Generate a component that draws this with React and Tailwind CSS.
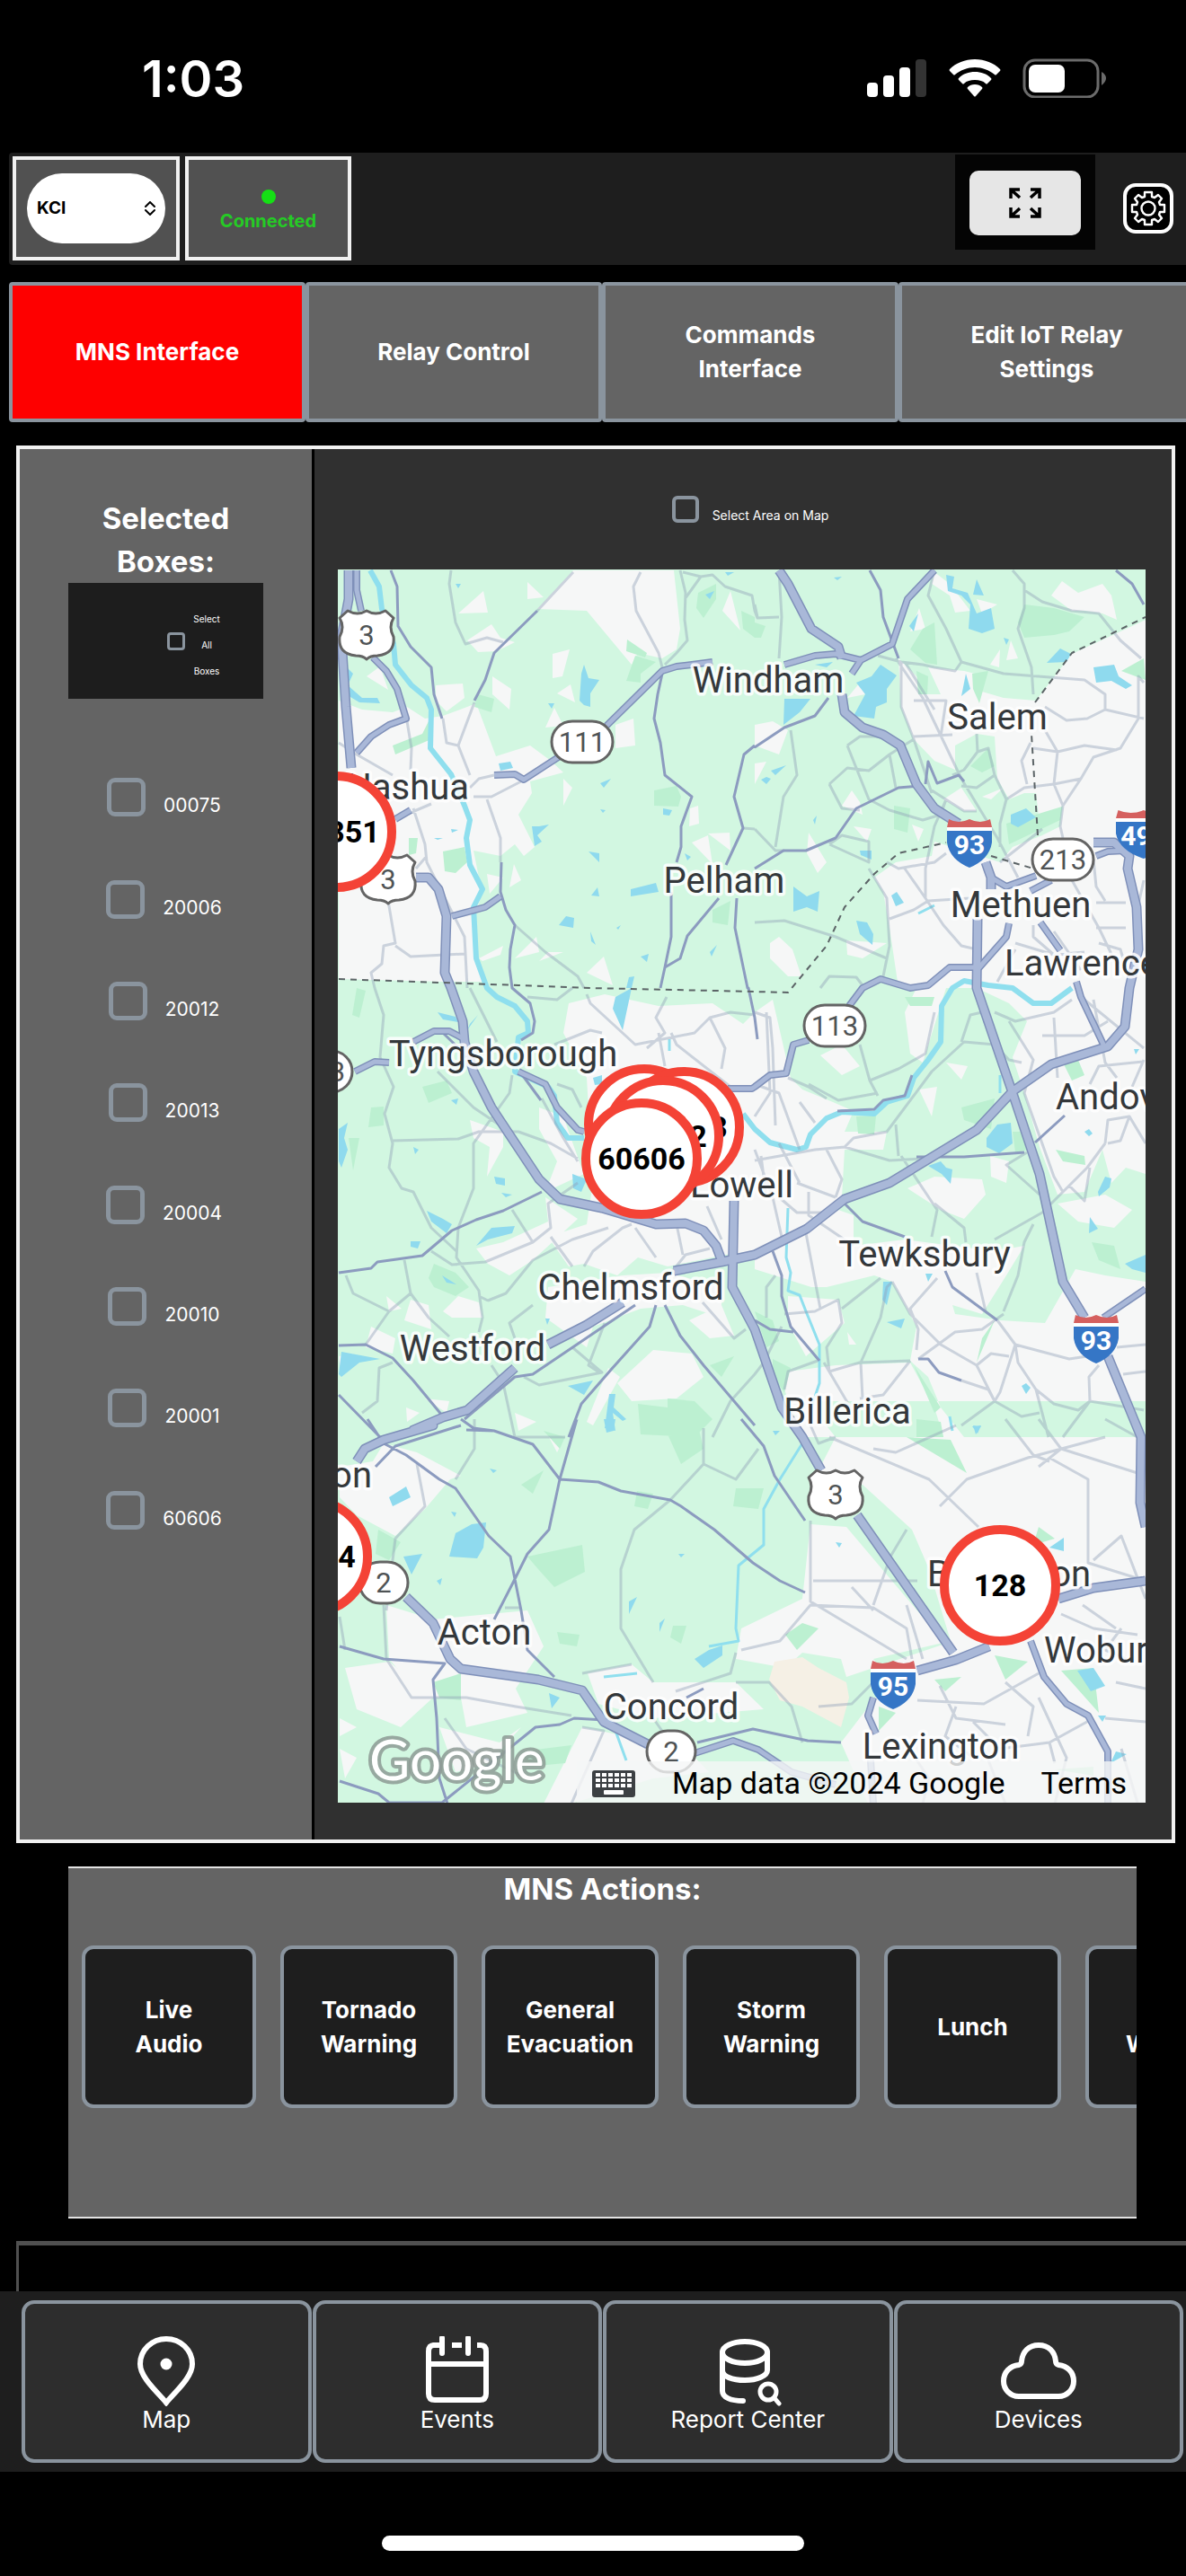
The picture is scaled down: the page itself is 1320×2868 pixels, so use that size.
import React from "react";

/* ------------------------------------------------------------------ */
/* Map geometry                                                        */
/* The map is surveyed in five sheets; each has an origin and a scale. */
/* A line or polygon is a list of points, a letter selects the sheet.  */
/* ------------------------------------------------------------------ */
const SHEETS = {
  a: [-16, -34, 3, 3],
  b: [464, -34, 3, 3],
  c: [-16, 466, 3, 3],
  d: [464, 466, 3, 3],
  e: [-16, 946, 1.633, 3],
};

function trace(line, closed) {
  let sheet = SHEETS.a;
  const out = [];
  for (const token of line.trim().split(/\s+/)) {
    if (SHEETS[token]) {
      sheet = SHEETS[token];
      continue;
    }
    const [x, y] = token.split(",").map(Number);
    out.push(`${Math.round(sheet[0] + x / sheet[2])} ${Math.round(sheet[1] + y / sheet[3])}`);
  }
  return "M" + out.join("L") + (closed ? "Z" : "");
}

const all = (text, closed) =>
  text
    .split(";")
    .filter((s) => s.trim())
    .map((s) => trace(s, closed))
    .join("");

const URBAN = all(
  `a 50,540 130,570 230,580 280,560 340,600 400,590 480,560 510,550 575,725 690,690 760,740 800,780 690,810 695,850 650,920 705,1030 670,1060 640,1020 590,1060 500,1040 520,1130 535,1180 500,1260 510,1400 540,1480 400,1480 50,1470;
  a 835,105 715,235 880,240 1030,420 1050,380 1130,400 1180,370 1190,300 1170,105;
  a 680,145 735,195 680,200; a 535,175 550,245 450,250; a 480,340 560,285 590,330 640,345 580,375 515,378;
  a 765,385 822,368 798,460 765,465; a 780,515 825,487 840,545; a 565,460 628,500 622,570 565,520;
  a 770,565 800,625 740,630; a 375,490 465,482 470,530 410,575 375,540; a 145,460 190,425 215,505;
  a 975,620 1035,600 1040,690 975,700; a 1360,175 1392,305 1332,240; a 1230,1015 1285,990 1300,1085; a 1285,985 1355,980 1360,1040;
  a 635,1085 660,1140 620,1165; a 545,1120 600,1130 555,1185; a 520,1400 600,1360 590,1390 530,1410; a 640,1400 710,1330 720,1380;
  a 880,1450 935,1395 965,1490; a 750,1380 800,1380 720,1410; a 800,800 830,830 800,890; a 1225,900 1250,890 1255,950 1220,960;
  b 1305,270 1060,385 940,540 830,530 760,510 770,460 700,440 580,430 620,520 570,520 560,480 480,400 490,560 530,670 600,740 670,770 670,690 740,650 800,660 810,800 850,870 900,850 940,850 950,950 1030,890 1020,960 960,990 860,1030 820,1080 600,1010 590,1060 470,1080 400,1130 430,1180 450,1300 480,1500 1305,1500;
  b 600,110 650,150 720,240 670,245 650,190 590,150; b 740,200 810,220 760,250; b 550,230 570,300 520,310; b 990,190 1025,140 1080,180 1160,150 1190,190 1210,270 1160,250 1100,240 1060,240;
  b 820,370 815,430 785,420; b 855,340 880,400 840,405; b 630,870 690,830 740,910 700,910; b 760,860 830,830 790,870;
  b 290,890 325,840 350,880 360,920; b 180,980 240,1080 210,1115 175,1050; b 50,1350 80,1330 125,1370 155,1460 110,1460 50,1400; b 305,1340 440,1350 360,1400 310,1390;
  b 0,620 60,610 110,640 80,720 0,690; b 0,750 40,745 0,820; b 330,960 390,970 375,1010; b 350,480 370,520 310,530; b 525,955 565,970 545,1010;
  c 820,50 940,20 1120,60 1300,50 1400,120 1440,80 d 60,40 120,300 160,340 260,380 330,410 300,480 440,480 430,540 300,540 290,700 180,790 0,880 c 1440,880 1340,890 1150,930 1050,900 980,960 870,920 820,930 750,830 880,790 900,650 880,300 800,150;
  c 720,400 800,430 840,540 870,620 740,680 780,580 720,470; c 490,440 600,480 600,530 545,630 555,530 500,500;
  c 510,870 600,850 750,780 740,700 850,770 700,910 620,960 550,920; c 290,1040 350,1060 360,1140 270,1110; c 400,1080 450,1030 520,1050 530,1100 430,1100;
  c 750,1000 1000,960 1150,950 1330,1000 1330,1100 1200,1060 1060,1070 900,1130 880,1200 740,1100; c 1100,1210 1230,1220 1270,1300 1180,1370 1030,1380 980,1320;
  c 880,1450 950,1270 990,1300 900,1460; c 275,1400 320,1420 280,1450; c 340,1370 420,1380 410,1420; c 640,1420 710,1450 650,1480; c 160,1130 240,1170 230,1220 140,1200;
  c 1220,1110 1330,1060 1370,1160 1290,1170; c 50,1230 100,1220 60,1300; c 210,1030 260,1070 220,1080;
  d 740,0 1305,0 1305,620 1240,600 1190,650 1160,540 1100,680 1010,690 950,530 900,350 860,230 910,110 850,50;
  d 0,900 160,820 280,740 330,760 330,860 500,840 800,880 900,860 840,960 760,1090 660,1060 670,1090 820,1110 970,1120 1070,940 1170,960 1305,980 1305,1500 700,1500 620,1400 580,1300 520,1245 540,1130 460,980 400,960 240,1000 190,1000 0,940;
  d 110,1280 270,1260 520,1250 600,1400 630,1500 160,1500 100,1340; d 110,1030 280,1040 300,1120 170,1230 110,1120;
  d 220,225 290,190 350,260 290,290; d 510,670 600,630 760,640 770,690 700,770 620,740; d 640,250 710,260 690,305; d 1010,720 1170,690 1260,740 1200,800 1080,780;
  d 550,340 610,330 590,430; d 785,560 850,580 840,650 790,630; d 540,0 640,0 560,250 520,220 500,80; d 310,1150 340,1190 315,1190;
  e 905,0 930,60 900,170 980,220 1070,370 1100,500 1140,740 1000,800 1030,870 1000,940 940,1080 990,1285 1495,1285 1495,-60 905,-60;
  e 885,350 950,360 1130,750 1000,830 950,860 940,800 870,780 840,830 750,800 760,700 870,600;
  e 30,260 30,160 90,140 110,80 170,110 250,190 230,200 185,300 130,390 60,320;
  e 115,620 200,670 370,640 400,760 350,900 370,980 260,1030 250,930 180,930 120,800; e 40,830 120,810 200,930 140,1030 60,970;
  e 480,850 560,820 600,880 750,880 800,970 600,1000 500,950; e 470,1030 660,1100 700,1180 600,1200 450,1285 400,1285;
  e 210,1030 320,1080 360,1030 300,1150 240,1180; e 30,1100 60,1130 40,1200; e 410,60 440,60 425,110; e 30,1000 60,1030 30,1060`,
  true
);

const PARKS = all(
  `a 1015,335 1080,380 1075,395 1010,375; a 1040,390 1110,410 1060,450 1060,480 1010,475; a 515,520 570,535 560,580 505,560;
  a 1105,840 1180,825 1195,860 1185,895 1105,890; a 400,1045 470,1030 480,1080 440,1115 405,1110; a 1250,180 1310,150 1310,200 1270,265 1245,230;
  a 1300,1240 1360,1210 1350,1290 1300,1280; a 230,690 330,650 350,610 360,670 240,720; a 285,1000 315,1000 310,1050 285,1055; a 1395,240 1440,260 1440,330 1400,300;
  b 880,280 900,220 1000,230 1100,260 1050,310 1000,320 900,330; b 520,370 560,300 600,280 610,420 570,415; b 540,440 580,460 575,520 545,520; b 725,450 780,440 750,550 730,500;
  b 720,760 780,700 800,760 760,780; b 465,890 520,900 510,980 465,970; b 1225,440 1300,400 1305,470; b 840,950 1025,895 1020,940 850,1020; b 0,280 35,290 20,330 0,330;
  c 330,330 410,310 430,350 350,385; c 350,970 370,920 440,950 485,1000 440,1030 370,1000; c 1050,1390 1150,1400 1150,1370 1240,1380 1300,1440 1240,1500 1060,1490;
  c 160,400 200,395 200,460 150,465; c 1290,1260 1370,1230 1330,1300; c 85,500 120,500 100,610; c 110,0 140,10 120,100 95,90;
  d 690,400 800,370 790,470 700,440; d 1005,540 1100,560 1105,590 1030,580; d 1125,850 1200,860 1220,940 1150,910; d 340,430 405,425 400,490 345,485; d 500,30 600,30 590,60 520,60;
  d 0,1080 60,1110 80,1180 40,1200; d 860,480 900,480 915,540 870,550; d 1030,250 1080,240 1100,290 1060,310; d 60,1240 120,1270 100,1350 60,1300; d 530,1260 620,1400 600,1420; d 800,1110 740,1250 760,1170; d 540,1440 620,1450 630,1500 540,1500;
  e 370,460 470,420 475,510 420,560 390,500; e 400,40 440,60 430,100; e 570,240 600,250 590,300 565,290; e 360,220 400,170 380,250; e 620,30 680,10 690,100 650,150;
  e 425,710 465,720 460,760 430,750; e 840,720 870,680 900,700 860,770; e 200,880 250,850 250,940 210,930; e 360,1110 450,1090 440,1150 370,1160;
  e 1300,360 1330,400 1290,420; e 1340,840 1400,830 1410,980 1370,900; e 100,370 140,410 120,470 95,450; e 1220,790 1280,810 1240,870; e 1110,870 1160,860 1130,910; e 635,690 660,690 650,750 630,730; e 750,230 800,230 790,300 745,290;
  e 1060,60 1140,70 1170,180; e 1010,960 1040,980 1010,1040; e 1330,1170 1400,1160 1400,1190`,
  true
);

const WATER = all(
  `a 870,420 885,465 920,470 890,515 890,560 870,555 855,540 860,450; a 70,420 100,450 80,490 130,530 180,530 190,550 120,545 75,520; a 585,750 625,745 632,765 590,775;
  a 697,960 720,960 752,955 715,990 730,1010 705,1025; a 885,1045 920,1050 920,1080; a 1025,1170 1110,1150 1120,1180 1025,1195; a 785,1290 810,1260 838,1265 835,1300;
  a 890,1310 908,1355 895,1345; a 1135,900 1165,905 1155,925 1135,920; a 1060,1395 1085,1385 1080,1412; a 1010,1500 1020,1465 1038,1460 1030,1500; a 1290,1380 1315,1355 1295,1395;
  a 440,150 460,150 450,165; a 1275,185 1305,175 1290,200; a 895,1190 915,1165 920,1195; a 750,550 772,550 762,568; a 925,815 960,800 935,830; a 1340,110 1370,110 1350,122; a 425,970 450,972 430,980; a 370,998 398,1000 380,1006; a 1205,1050 1228,1062 1215,1075; a 925,902 942,905 932,915; a 978,1298 992,1290 985,1306;
  b 640,120 665,125 660,165 710,180 740,250 790,230 800,300 760,315 715,300 720,220 690,190 645,175; b 740,135 765,190 730,185; b 515,290 545,250 530,310;
  b 420,420 475,455 440,500 440,545 405,560 400,600 330,590 370,520 340,480 390,460; b 100,535 185,535 150,580 95,620; b 975,415 1020,365 1055,385 1040,410;
  b 1130,430 1200,420 1215,460 1260,490 1240,500 1190,475 1140,480; b 705,450 720,500 690,525; b 130,1160 175,1195 215,1175 210,1245 175,1230 130,1245; b 455,1190 475,1180 497,1215 470,1228;
  b 340,1275 375,1280 395,1320 393,1355 350,1320; b 855,920 905,900 940,930 880,962 855,950; b 350,1040 390,1040 390,1070 355,1055; b 55,775 105,755 70,790; b 20,805 40,795 55,800 40,820; b 265,130 290,125 275,138; b 200,420 260,410 240,430; b 830,330 850,335 840,355; b 195,940 208,925 200,955;
  c 975,30 1030,0 1000,140 965,70; c 380,80 440,95 450,115 400,105; c 50,470 80,450 70,500 80,540 60,600 50,580; c 570,630 605,635 605,660 575,655; c 345,745 400,770 430,790 410,820 360,780;
  c 290,845 325,845 315,870 292,865; c 510,860 560,800 640,795 630,820 550,840; c 830,620 880,640 860,680 835,670; c 60,1215 190,1240 120,1250 60,1300 50,1290; c 815,1330 900,1310 870,1360;
  c 955,1355 975,1355 970,1400 1010,1440 1000,1445 965,1420 975,1480 940,1470; c 300,530 318,540 305,555; c 900,300 930,290 930,320 905,325; c 595,685 630,690 610,698; c 425,375 450,370 445,390; c 480,140 515,90 490,120; c 395,960 445,990 410,985; c 740,1105 755,1105 748,1125;
  d 775,500 810,455 855,450 860,520 815,552 775,530; d 580,595 620,580 640,600 660,605 655,655 625,620; d 430,980 460,980 440,1060 425,1040; d 440,1115 500,1105 490,1138; d 570,955 593,955 580,980;
  d 890,1330 905,1320 920,1335 905,1355; d 725,1465 755,1460 745,1488; d 1170,630 1190,635 1185,665 1150,695 1145,680; d 1120,765 1145,805 1115,820; d 1235,920 1305,890 1305,950 1260,940; d 1100,480 1115,470 1128,485 1115,495; d 60,1480 85,1480 70,1495; d 1265,205 1285,205 1272,222;
  e 240,380 270,350 295,345 290,430 280,465 228,460; e 145,460 180,450 160,520; e 120,260 150,225 158,260 125,290; e 700,770 725,755 725,790 690,830 675,800; e 410,915 430,930 415,965;
  e 555,610 570,595 555,650; e 610,680 620,665 610,710; e 1370,840 1400,830 1420,890 1395,910; e 1320,430 1345,395 1345,440; e 1440,1110 1460,1120 1430,1150; e 232,310 242,312 238,328; e 645,450 657,450 650,462; e 205,540 215,530 212,556; e 302,165 315,170 308,180; e 510,0 530,0 528,40 515,45; e 1180,20 1195,25 1185,50; e 930,410 942,415 938,430; e 1408,990 1422,990 1415,1010`,
  true
);

const BEIGE = all(`e 820,810 870,795 900,830 950,880 955,930 940,1030 870,960 830,940 810,870`, true);

const RIVERS = all(
  `a 155,105 185,160 195,235 235,350 240,420 295,490 345,530 360,570 358,700 425,785 470,890 488,940 478,1000 490,1090 530,1170 500,1230 510,1400 545,1500 c 580,30 640,60 680,110 685,150 650,165 640,280 750,330 770,360 780,450 815,500 870,500;
  c 1400,420 1440,470 d 50,515 140,540 170,530 185,490 240,435 290,415 400,420 440,380 510,360 530,300 580,240 620,180 625,60 660,0 b 700,1475 780,1490 d 860,0 930,50 990,50 1060,0`
);

const CREEKS = all(
  `d 110,735 105,900 120,950 110,1010 150,1025 170,1080 215,1190 215,1320 190,1400; e 870,80 830,200 800,300 800,420 755,490 750,700 755,740 700,760; e 510,860 570,850; e 530,1040 550,1140; d 650,1430 660,1480; b 545,1250 600,1225; d 820,290 820,350; c 1155,170 1155,210`
);

const LOCAL = all(
  `a 425,105 420,150 440,280 475,350 545,330 600,345; a 835,110 715,240; a 505,545 450,690 490,790; a 1060,110 1035,160 1045,240 1120,380 1135,440;
  a 1190,105 1210,180 1205,270 1215,340 1180,380 1140,420; a 1200,110 1260,125 1300,120 1340,160 1430,190 b 0,240 10,265 80,260; a 1260,125 1205,200;
  a 280,610 295,700 290,770; a 400,600 410,680 450,690; a 110,720 230,790; a 50,680 110,720; a 300,900 340,1020 345,1080 470,1330 480,1500; a 345,1060 310,1100;
  a 215,1210 240,1350 200,1360 195,1420 160,1450 170,1500; a 240,1360 290,1395 470,1385; a 500,860 560,860 660,810; a 490,830 520,800 570,790; a 545,870 590,1000 590,1080; a 640,1290 740,1380 850,1460 870,1500; a 240,935 360,885; a 1400,965 1440,970;
  c 170,0 200,90 190,230 235,330 205,420 230,520 220,600 260,670 300,680 360,800 445,880; c 230,510 450,505 520,480 650,480 760,520 850,570; c 490,0 580,180; c 380,280 500,400 620,480; c 630,290 620,350 500,520 500,670 450,800 445,900 520,1010 530,1100 520,1150;
  c 130,1420 180,1380 185,1270 230,1250; c 75,960 100,1020 220,1080 290,1020 270,910; c 220,1080 140,1190; c 290,1020 350,1100 420,1165; c 360,880 430,925 540,915 700,850 760,800 750,720 850,650; c 550,1045 610,1020 700,910 830,840 950,800; c 520,1030 550,1045;
  c 870,930 900,880 1000,800 1030,790; c 760,830 830,930; c 1040,800 1110,900; c 1180,790 1200,890; c 1280,730 1330,840; c 1160,950 1210,890 1290,870; c 700,1060 620,1120 640,1170; c 1265,1050 1370,1170 1410,1140; c 940,1120 885,1260 920,1285;
  c 1080,200 1140,150 1110,100 1145,30; c 880,20 890,50 1040,190 1240,150 1290,100 1360,80 1440,90; c 770,190 890,140 930,150; c 1160,150 1180,190 1360,330; c 1290,100 1340,200 1330,270; c 1120,150 1140,260; c 680,30 780,40 830,0;
  c 670,1300 720,1325 930,1285 830,1200; c 560,1260 600,1320 640,1500; c 1300,1500 1360,1380 1440,1290; c 630,740 700,850; c 780,320 830,340 860,400; c 730,370 800,500 850,580;
  b 80,105 90,260 80,400; b 600,105 580,190 640,300 690,410 830,450 1100,470 1170,520 1170,570 1110,600 1040,605 970,560; b 410,390 490,410 560,420 600,430 670,440 690,410; b 860,105 900,150 900,230 880,300 925,430 930,520;
  b 900,170 960,210 1060,240 1150,250 1220,340 1290,400; b 470,400 560,530 690,800 810,1000 880,1130; b 500,410 600,570; b 1170,570 1300,600; b 490,410 490,560 530,670 590,850; b 310,690 380,870 450,905 560,940 620,920 640,870; b 310,690 350,660 440,660;
  b 250,820 310,765 380,775 450,720 530,670; b 250,820 290,900 350,905; b 450,720 470,830; b 120,640 140,790 95,860 70,1030; b 0,1280 100,1275 270,1330 440,1400 430,1460; b 380,1100 440,1200 450,1360 430,1460; b 0,970 70,1040 100,1040; b 0,220 10,260;
  b 1300,480 1280,460 1280,600 1220,700 1130,730 1090,800 1030,890 1020,960 1030,1000; b 1210,705 1100,690 1010,710 930,700; b 840,870 900,830 1000,820 1090,800; b 800,790 840,870 820,950 820,1030; b 250,1020 290,990 380,1010 380,1080 250,1020; b 500,1100 570,1200 630,1290 690,1360 740,1370;
  b 450,1270 530,1240 580,1210 720,1200; b 440,1080 480,1100 600,1080 640,1050; b 1060,1140 1150,1300 1220,1450; b 1140,1300 1240,1300; b 1130,1070 1140,1160 1170,1210; b 1140,1215 1240,1215; b 1300,1140 1280,1220; b 1150,1350 1220,1370 1240,1430; b 530,540 640,540 620,660; b 530,660 660,655; b 740,650 745,710 700,770 660,790; b 745,710 780,700 800,790 740,830 690,825;
  b 970,640 1010,710 1000,820 1030,890; b 920,680 890,740 910,820; b 590,840 700,910 740,910; b 640,870 600,960 570,1100 570,1200; b 870,1350 1000,1390 1100,1380; b 930,1290 930,1330 1000,1390; b 1000,1310 1090,1440; b 810,1480 870,1370; b 220,1500 250,1460 340,1465 360,1490; b 820,1080 960,970;
  d 0,80 50,100 60,200 70,460; d 40,80 50,350 0,430; d 350,190 385,310 410,360; d 180,320 280,375 410,350; d 385,310 480,270 570,220 600,80; d 470,455 480,560; d 0,575 200,540 300,530 450,575 560,570; d 300,530 330,500 440,480 590,280 700,180 800,190 850,240 890,250; d 690,180 720,90 760,80;
  d 490,560 610,740 590,830; d 600,720 700,800 705,850; d 240,540 290,640 270,700; d 140,650 270,700; d 800,840 960,750 1020,690 1110,600 1170,520; d 850,110 930,240 900,350 1000,630 1030,680; d 1050,660 1100,710 1120,600; d 910,550 840,590 950,690; d 1300,245 1150,260 1120,320; d 800,80 870,110 1000,80 1060,40; d 1000,100 1010,300;
  d 930,790 900,850 880,960 830,1080; d 740,950 770,1080; d 610,970 520,1070 545,1140 540,1210; d 460,980 520,1090 620,1190 740,1260 800,1380 890,1430 950,1420; d 545,1240 670,1150 760,1140 830,1090; d 870,1190 1050,1240 1110,1230; d 1210,1200 1305,1190; d 1230,1290 1305,1280;
  d 810,1110 870,1190 880,1250 940,1340 1000,1390 1080,1410 1120,1380 1300,1410; d 1150,1260 1115,1300 1120,1380 1030,1500; d 250,1280 350,1250 520,1245; d 360,1370 355,1250 420,1100 440,1000 460,980; d 170,820 220,1070 280,1040 290,1120 240,1200 250,1280; d 290,1070 420,970; d 100,1090 200,1080 220,1070; d 230,1250 330,1420;
  d 350,1370 430,1360 520,1245; d 870,1190 820,1350 800,1380; d 740,1260 790,1220 850,1230; d 690,1310 780,1340 800,1380 690,1460; d 940,1340 980,1500; d 1170,520 1180,440 1250,430 1220,510 1180,520; d 1250,430 1305,520; d 960,160 1100,160 1180,110; d 1100,40 1300,200; d 1130,40 1170,250 1210,300; d 1300,240 1260,330;
  d 0,320 80,350 150,540; d 0,540 60,700 90,830; d 20,560 40,700; d 80,520 150,650; d 110,300 180,330 240,370 ; d 150,380 200,450; d 180,680 180,760 330,860; d 80,700 140,750 240,750; d 0,1290 30,1250 90,1130; d 210,1245 110,1280 100,1340; d 70,960 40,1000 40,1100;
  e 275,0 275,100 240,200; e 170,150 185,290 130,400 115,640; e 690,30 690,150 630,270 565,370 540,500 540,700 600,880; e 690,150 750,200 790,100; e 885,340 885,610 950,680 1060,800; e 760,770 830,740 885,620 1000,630 1060,700 1070,800; e 640,910 740,850 750,780;
  e 470,850 560,820; e 110,620 115,800 160,930 260,930 350,960 450,990; e 750,880 810,880 850,960 870,1080; e 920,60 1100,200 1190,360; e 1120,290 1170,200 1280,130 1420,60; e 1000,100 1040,110 1150,20; e 1240,0 1290,120 1320,140; e 1340,100 1480,180; e 1300,0 1340,100 1300,160; e 1420,0 1480,60;
  e 1320,130 1390,200 1390,480 1495,540; e 1080,940 1200,950 1300,850; e 1120,890 1150,1000 1240,1020; e 1320,1080 1400,1000; e 1060,370 1030,460 1000,620; e 890,540 1080,540; e 330,630 360,630; e 880,0 900,80 930,60; e 350,60 440,60; e 30,660 40,770; e 450,1285 510,1040 470,1030; e 220,1000 260,1100 370,1200; e 600,1000 630,1080;
  e 1340,650 1400,700 1480,720; e 1380,620 1440,700; e 1450,700 1420,770 1460,800; e 1150,960 1130,1060 1180,1130; e 1180,1010 1230,1100 1320,1080 1330,1150; e 1240,880 1290,960 1280,1060; e 1300,930 1350,1130 1330,1285; e 1440,880 1495,900; e 1420,1000 1495,1010; e 1060,1090 1100,1200 1090,1285; e 1200,1100 1240,1285; e 1450,1100 1480,1280; e 1060,620 1090,800; e 960,560 1000,640; e 1400,470 1450,390 1495,600; e 900,960 960,950 1000,880`
);

const SECONDARY = all(
  `a 225,105 245,160 250,290 290,360 360,430 370,520 395,600; a 715,240 570,380 540,470 505,540; a 1130,450 1115,520 1105,600 1125,680 1140,790 1230,860 1195,960 1195,1030 1180,1080; a 1160,1180 1160,1330 1140,1430 1125,1500;
  a 1440,690 1405,720 1370,860 1400,965 1345,1090; a 1320,1200 1215,1325 1190,1400 1140,1430; a 1380,1200 1375,1300 1415,1500 c 1420,0 1440,100 d 10,170; a 595,1080 590,1180 610,1240 640,1290 625,1370 620,1430 630,1500 c 690,50 705,110 700,150 660,175;
  b 385,105 420,170 430,260 480,400; b 245,530 200,590 100,630 0,695; b 0,1100 95,1040 170,1042 270,1000 340,900 480,830 550,825; b 1205,105 1260,150 1300,220; b 570,820 580,745 610,815 680,790 700,810;
  d 300,720 360,780 500,830; d 635,945 660,1000 810,1110; d 545,1240 580,1240 615,1285 690,1310; d 540,565 700,565 900,550; d 60,880 90,960 90,1030 120,1130 215,1245; d 0,1110 50,1140 130,1150; d 935,515 1035,425; d 275,410 400,405 430,375 500,360 525,290;
  c 50,950 160,935 180,915 330,895 430,810 510,775 600,745 730,680; c 50,1195 140,1190 230,1235 300,1310 400,1430; c 50,1360 190,1500; c 820,1500 860,1390 960,1275 1090,1130 1110,1060; c 1140,1060 1190,1160 1270,1260 1440,1460; c 470,1440 640,1300 700,1290 1040,1060; c 660,285 725,375;
  c 460,1440 500,1470 570,1480 630,1500; e 430,200 500,210 540,240 630,270 650,290 710,370 780,480 830,540 875,580; e 260,35 310,40 380,85 430,200 410,370 370,450 345,545 310,670; e 110,80 150,120 210,200 240,230 300,390 340,460 350,550 360,640 370,770 420,860; e 80,0 110,80; e 460,0 430,200;
  e 760,0 800,90 820,190 875,340; e 30,760 110,800 220,815 200,870 205,1000 210,1200 225,1285; e 30,1210 100,1250 120,1280 215,1280 385,1030 430,1020 455,1000 510,1005; e 680,1080 780,1035 880,1075 940,1080; e 95,160 130,90 250,20; e 660,930 690,900; c 400,150 500,250`
);

const PRIMARY = all(
  `a 110,105 110,170 125,240; a 165,395 210,440 245,500 275,600 220,620 160,660 110,715; a 570,790 640,785 670,805 790,725; a 945,625 1130,440 1180,425 1230,420 1300,410; b 100,420 200,390 270,385 355,405 460,350 510,200 600,105; b 355,405 325,450;
  b 1140,1060 1180,1045 1240,1040; b 920,1175 990,1140; b 955,1280 1020,1375; b 1075,1480 d 1090,30 1170,200; b 850,1285 840,1330 750,1430 650,1430 580,1490 520,1500 420,1470 360,1500 d 315,60; d 180,175 130,190 105,285 50,290 0,330 c 1430,335 1350,335;
  c 105,280 170,245 220,250; c 300,180 370,145 420,145 470,170; c 650,280 740,320 780,400 850,475 870,480; a 430,1260 540,1230 590,1195; a 240,935 290,905; b 940,1125 840,1160 790,1130; d 1165,1100 1305,1005;
  e 1285,740 1310,860 1350,950 1390,990 1425,1110 1425,1285; e 675,1115 745,1075 790,1105 850,1180 930,1220; e 1000,930 990,990 1005,1050; e 995,1140 1000,1285`
);

const HIGHWAYS = all(
  `a 85,105 85,200 60,330 75,560 92,765; a 310,1130 350,1130 385,1170 410,1260 405,1450 425,1500 c 465,110 470,180 500,280 560,400 720,640 790,705 930,735 1110,790 1210,785 1270,810 1310,860 1330,910;
  e 60,140 75,100 110,70 200,20 c 300,1475 400,1435 480,1410 640,1270; c 750,1190 880,1125 1000,1050; c 1170,945 1330,915 1440,890 d 175,805 300,705 450,650 740,475 860,345 990,255 1180,195 1235,130 1250,0 b 1280,1370 1275,1230 1245,1100 1250,1060 1200,1015 1130,1015;
  c 1370,710 1365,1000 1440,1140 d 90,1400 160,1500 e 905,170; e 970,320 1145,780; b 80,105 110,150 190,300 280,360 290,400; b 290,520 300,580 360,630 430,655 485,690 540,820 600,900 680,950; b 770,1080 790,1130 790,1170; b 745,1270 740,1500 d 860,350 950,620 1030,980 1100,1100;
  d 1180,1230 1290,1500 e 1485,280 1495,360; e 150,595 200,680 230,800 250,835 390,870 470,905 510,1010 590,1085; e 1080,840 1150,805 1210,760; e 1335,600 1400,565 1495,540`
);

const BORDERS = all(
  `a 50,1470 650,1490 c 890,0 1440,12 d 110,14 b 240,1360 300,1230 400,1120 480,1050 640,1015; b 790,1060 930,1100; b 945,990 925,650; b 935,545 1060,380 1305,262`
);

const TOWNS = [
  ["Windham", 479, 137, "middle"],
  ["Salem", 734, 178, "middle"],
  ["Nashua", 146, 256, "end"],
  ["Pelham", 430, 360, "middle"],
  ["Methuen", 760, 387, "middle"],
  ["Lawrence", 742, 452, "start"],
  ["Tyngsborough", 184, 553, "middle"],
  ["Lowell", 507, 699, "end"],
  ["Andover", 799, 601, "start"],
  ["Tewksbury", 653, 776, "middle"],
  ["Chelmsford", 326, 813, "middle"],
  ["Westford", 150, 881, "middle"],
  ["Billerica", 567, 951, "middle"],
  ["Littleton", 38, 1022, "end"],
  ["Acton", 163, 1197, "middle"],
  ["Concord", 371, 1280, "middle"],
  ["Lexington", 671, 1324, "middle"],
  ["Burlington", 747, 1132, "middle"],
  ["Woburn", 786, 1217, "start"],
];

const STATE_ROUTES = [
  ["111", 272, 192, 68],
  ["213", 807, 323, 68],
  ["113", 553, 508, 68],
  ["113", -18, 559, 68],
  ["2", 51, 1128, 54],
  ["2", 371, 1316, 54],
];
const US_ROUTES = [
  ["3", 32, 72],
  ["3", 56, 344],
  ["3", 554, 1029],
];
const INTERSTATES = [
  ["93", 703, 304, 1],
  ["495", 897, 294, 1.24],
  ["93", 844, 856, 1],
  ["95", 618, 1241, 1],
];

/* Alarm boxes pinned on the map, lowest first */
const PINS = [
  { id: "00351", place: "left-[-2px] top-[292px]" },
  { id: "20004", place: "left-[-29px] top-[1099px]" },
  { id: "20001", place: "left-[341px] top-[618px]" },
  { id: "20013", place: "left-[385px] top-[621px]" },
  { id: "20012", place: "left-[362px] top-[631px]" },
  { id: "60606", place: "left-[338px] top-[656px]" },
  { id: "128", place: "left-[737px] top-[1131px]" },
];

function AreaMap() {
  return (
    <div className="relative h-[1373px] overflow-hidden bg-[#d2f7e1] font-['Roboto',sans-serif]">
      <svg
        viewBox="0 0 899 1373"
        preserveAspectRatio="xMinYMin slice"
        className="block h-full w-full"
        fontFamily="Roboto, sans-serif"
        role="img"
        aria-label="Map of the Lowell area"
      >
        <rect width="899" height="1373" fill="#d2f7e1" />
        <path d={URBAN} fill="#f6f7f7" />
        <path d={BEIGE} fill="#f5f0e5" />
        <path d={PARKS} fill="#bcf0d1" />
        <path d={WATER} fill="#8fdaee" />
        <g fill="none" strokeLinejoin="round">
          <path d={RIVERS} stroke="#8fdfee" strokeWidth="6" />
          <path d={CREEKS} stroke="#8fdfee" strokeWidth="3" />
          <path d={LOCAL} stroke="#8fa0b8" strokeOpacity="0.42" strokeWidth="3" />
          <path d={SECONDARY} stroke="#8c9bbf" strokeWidth="3" />
          <path d={PRIMARY} stroke="#7f90b9" strokeWidth="8" />
          <path d={HIGHWAYS} stroke="#7f90b9" strokeWidth="11" />
          <path d={PRIMARY} stroke="#a9b8d8" strokeWidth="5" />
          <path d={HIGHWAYS} stroke="#a9b8d8" strokeWidth="8" />
          <path d={BORDERS} stroke="#5c6467" strokeWidth="2" strokeDasharray="7 6" />
        </g>

        <g fontSize="40" fill="#34383b" stroke="#ffffff" strokeWidth="7" strokeOpacity="0.85" strokeLinejoin="round" paintOrder="stroke">
          {TOWNS.map(([name, x, y, anchor]) => (
            <text key={name} x={x} y={y} textAnchor={anchor}>
              {name}
            </text>
          ))}
        </g>

        <g fontSize="31" fill="#4f5355" textAnchor="middle">
          {STATE_ROUTES.map(([n, x, y, w], i) => (
            <g key={i}>
              <rect x={x - w / 2} y={y - 23} width={w} height="46" rx="23" fill="#fff" stroke="#646464" strokeWidth="3" />
              <text x={x} y={y + 11}>{n}</text>
            </g>
          ))}
          {US_ROUTES.map(([n, x, y], i) => (
            <g key={i}>
              <path
                transform={`translate(${x} ${y})`}
                d="M-30-18L-21-26Q-10-20 0-26Q10-20 21-26L30-18Q24-8 30 3Q32 22 12 24Q4 24 0 28Q-4 24-12 24Q-32 22-30 3Q-24-8-30-18Z"
                fill="#fff"
                stroke="#646464"
                strokeWidth="3"
                strokeLinejoin="round"
              />
              <text x={x} y={y + 12}>{n}</text>
            </g>
          ))}
        </g>
        <g fontSize="30" fontWeight="700" fill="#fff" textAnchor="middle">
          {INTERSTATES.map(([n, x, y, k], i) => (
            <g key={i}>
              <g transform={`translate(${x} ${y}) scale(${k} 1)`}>
                <path d="M-23-26Q-12-20 0-26Q12-20 23-26L25-17H-25Z" fill="#d5605f" />
                <path d="M-25-17H25V-13H-25Z" fill="#fff" />
                <path d="M-25-13H25V0Q22 19 0 28Q-22 19-25 0Z" fill="#3576c6" />
              </g>
              <text x={x} y={y + 13}>{n}</text>
            </g>
          ))}
        </g>

        <text
          x="35"
          y="1348"
          fontFamily="Lato, sans-serif"
          fontSize="62"
          fontWeight="400"
          fill="#fff"
          stroke="#8d9a94"
          strokeOpacity="0.85"
          strokeWidth="8"
          strokeLinejoin="round"
          paintOrder="stroke"
        >
          Google
        </text>
      </svg>

      {PINS.map((pin) => (
        <button
          key={pin.id}
          type="button"
          className={`absolute flex size-[134px] -translate-x-1/2 -translate-y-1/2 items-center justify-center rounded-full border-[10px] border-[#f44336] bg-white text-[34px] font-bold text-black ${pin.place}`}
        >
          {pin.id}
        </button>
      ))}

      <div className="absolute right-0 bottom-0 flex h-[46px] items-center bg-[#f5f6f6]/80 pt-[3px] pr-[21px] pl-[17px] text-[34px] leading-[43px] text-black">
        <button type="button" aria-label="Keyboard shortcuts">
          <svg viewBox="0 0 48 30" className="h-[30px] w-[48px]">
            <rect width="48" height="30" rx="3" fill="#3c4043" />
            <g fill="#fff">
              {[0, 1, 2].map((r) =>
                [0, 1, 2, 3, 4, 5].map((c) => <rect key={`${r}${c}`} x={4 + c * 7} y={3 + r * 6} width="5" height="4" />)
              )}
              <rect x="13" y="22" width="22" height="5" rx="1" />
            </g>
          </svg>
        </button>
        <span className="ml-[41px] whitespace-nowrap">Map data ©2024 Google</span>
        <a href="#terms" className="ml-[40px]">
          Terms
        </a>
      </div>
    </div>
  );
}

/* ------------------------------------------------------------------ */
/* Page                                                                */
/* ------------------------------------------------------------------ */
const TABS = ["MNS Interface", "Relay Control", "Commands Interface", "Edit IoT Relay Settings"];
const BOXES = ["00075", "20006", "20012", "20013", "20004", "20010", "20001", "60606"];
const ACTIONS = ["Live Audio", "Tornado Warning", "General Evacuation", "Storm Warning", "Lunch", "Fire Warning"];

function StatusBar() {
  return (
    <div className="flex h-[170px] items-start justify-between pt-[60px] pr-[88px] pl-[158px]">
      <time className="text-[56px] leading-[56px] font-semibold">1:03</time>
      <div className="flex items-center pt-[5px]">
        <svg viewBox="0 0 66 44" className="h-[44px] w-[66px]" fill="#fff">
          <rect x="0" y="27" width="12" height="16" rx="4" />
          <rect x="18" y="19" width="12" height="24" rx="4" />
          <rect x="36" y="10" width="12" height="33" rx="4" />
          <rect x="54" y="1" width="12" height="42" rx="4" fill="#333" />
        </svg>
        <svg viewBox="0 0 58 44" className="ml-[25px] h-[44px] w-[58px]" fill="#fff">
          <path d="M29 1C40 1 50 5 57 12Q58 13 57 14L53 18Q52 19 51 18C45 13 37 10 29 10S13 13 7 18Q6 19 5 18L1 14Q0 13 1 12C8 5 18 1 29 1Z" />
          <path d="M29 15C36 15 42 17 47 22Q48 23 47 24L43 28Q42 29 41 28C38 25 34 24 29 24S20 25 17 28Q16 29 15 28L11 24Q10 23 11 22C16 17 22 15 29 15Z" />
          <path d="M29 29Q34 29 37 32Q38 33 37 34L30 42Q29 43 28 42L21 34Q20 33 21 32Q24 29 29 29Z" />
        </svg>
        <svg viewBox="0 0 94 44" className="ml-[24px] h-[44px] w-[94px]">
          <rect x="2" y="2" width="82" height="41" rx="12" fill="none" stroke="#6b6b6b" strokeWidth="3" />
          <rect x="7" y="7" width="40" height="31" rx="7" fill="#fff" />
          <path d="M88 15Q93 18 93 22T88 30Z" fill="#6b6b6b" />
        </svg>
      </div>
    </div>
  );
}

function Header() {
  return (
    <header className="ml-[10px] flex h-[125px] items-start rounded-l-[4px] bg-[#1e1e1e]">
      <div className="mt-[4px] ml-[4px] flex h-[116px] w-[186px] items-center justify-center border-4 border-[#f1f1f1] bg-[#515151]">
        <div className="relative">
          <select aria-label="Site" className="h-[78px] w-[154px] appearance-none rounded-[39px] bg-white pl-[11px] text-[19px] font-bold text-black">
            <option>KCI</option>
          </select>
          <svg viewBox="0 0 14 16" className="pointer-events-none absolute top-[31px] right-[10px] h-[16px] w-[14px]" fill="none" stroke="#000" strokeWidth="2" strokeLinecap="round">
            <path d="M2 6L7 1L12 6M2 10L7 15L12 10" />
          </svg>
        </div>
      </div>
      <div className="mt-[4px] ml-[6px] flex h-[116px] w-[185px] flex-col items-center border-4 border-[#f1f1f1] bg-[#515151] pt-[33px]">
        <span className="size-[16px] rounded-full bg-[#15e015]" />
        <span className="mt-[6px] text-[20px] leading-[26px] font-bold text-[#25cb25]">Connected</span>
      </div>
      <div className="mt-[2px] ml-auto flex h-[106px] w-[156px] justify-center bg-[#040404] pt-[18px]">
        <button type="button" aria-label="Full screen" className="flex h-[72px] w-[124px] items-center justify-center rounded-[10px] bg-[#e6e6e6]">
          <svg viewBox="0 0 36 34" className="h-[34px] w-[36px]" fill="none" stroke="#000" strokeWidth="3.5">
            <path d="M2 12V2H12M2 2L12 11M24 2H34V12M34 2L24 11M2 22V32H12M2 32L12 23M24 32H34V22M34 32L24 23" />
          </svg>
        </button>
      </div>
      <button type="button" aria-label="Settings" className="mt-[34px] mr-[14px] ml-[31px] flex size-[56px] items-center justify-center rounded-[14px] border-4 border-white bg-black">
        <svg viewBox="-20 -20 40 40" className="size-[40px]" fill="none" stroke="#fff" strokeWidth="2.4" strokeLinejoin="round">
          <path d="M-4-18H4L4-13L7-12L11-15L15-11L12-7L13-4H18V4H13L12 7L15 11L11 15L7 12L4 13V18H-4V13L-7 12L-11 15L-15 11L-12 7L-13 4H-18V-4H-13L-12-7L-15-11L-11-15L-7-12L-4-13Z" />
          <circle r="7.5" />
        </svg>
      </button>
    </header>
  );
}

function Tick({ className }) {
  return <input type="checkbox" className={`appearance-none border-[#8a949e] ${className}`} />;
}

function BoxList() {
  return (
    <aside className="w-[325px] shrink-0 bg-[#646464]">
      <h2 className="mx-auto w-[200px] pt-[53px] text-center text-[33px] leading-[48px] font-bold">Selected Boxes:</h2>
      <label className="ml-[54px] flex h-[129px] w-[217px] items-center bg-[#1d1d1d] pl-[110px] text-center text-[10px] leading-[29px]">
        <Tick className="size-[20px] rounded-[4px] border-[3px]" />
        <span className="ml-[6px] w-[36px] pt-[9px]">Select All Boxes</span>
      </label>
      <ul className="mt-[53px] grid h-[907px] grid-rows-8">
        {BOXES.map((id) => (
          <li key={id} className="flex items-center justify-center">
            <label className="mr-[4px] flex items-end gap-[20px] text-[21px] leading-[24px]">
              <Tick className="size-[43px] rounded-[9px] border-[5px]" />
              {id}
            </label>
          </li>
        ))}
      </ul>
    </aside>
  );
}

function Actions() {
  return (
    <section className="mr-[55px] ml-[76px] mt-[26px] h-[392px] overflow-hidden border-y-2 border-[#e3e3e3] bg-[#646464]">
      <h2 className="text-center text-[33px] leading-[46px] font-bold">MNS Actions:</h2>
      <div className="mt-[40px] flex gap-[27px] pl-[15px]">
        {ACTIONS.map((name) => (
          <button
            key={name}
            type="button"
            className="flex h-[181px] w-[197px] shrink-0 items-center justify-center rounded-[13px] border-4 border-[#8a949e] bg-[#1e1e1e] px-[12px] text-[26px] leading-[38px] font-bold first:w-[194px]"
          >
            <span className="w-min">{name}</span>
          </button>
        ))}
      </div>
    </section>
  );
}

const NAV = [
  {
    label: "Map",
    icon: (
      <>
        <path d="M42 74C32 62 13 46 13 31A29 28 0 0 1 71 31C71 46 52 62 42 74Z" />
        <circle cx="42" cy="31" r="6.5" fill="#fff" stroke="none" />
      </>
    ),
  },
  {
    label: "Events",
    icon: (
      <>
        <path d="M16 10Q10 10 10 17V64Q10 71 17 71H67Q74 71 74 64V17Q74 10 68 10H64M36 10H47M10 31H74" />
        <path d="M25 2V19M54 2V19M16 10H25" strokeLinecap="round" />
      </>
    ),
  },
  {
    label: "Report Center",
    icon: (
      <>
        <ellipse cx="39" cy="18" rx="25" ry="12" />
        <path d="M14 18V61C14 68 23 72 37 72M64 18V38C64 44 53 49 39 49S14 45 14 38" strokeLinecap="round" />
        <circle cx="65" cy="62" r="9" strokeWidth="5" />
        <path d="M72 69L77 75" strokeWidth="5" strokeLinecap="round" />
      </>
    ),
  },
  {
    label: "Devices",
    icon: <path d="M20 67C10 67 3 59 3 50C3 40 10 33 20 32Q23 31 23 28C24 17 31 10 42 10S60 17 61 28Q61 31 64 32C74 33 81 40 81 50C81 59 74 67 64 67Z" />,
  },
];

function BottomNav() {
  return (
    <nav className="flex h-[201px] gap-px bg-[#1e1e1e] pt-[10px] pr-[3px] pl-[24px]">
      {NAV.map((item) => (
        <button
          key={item.label}
          type="button"
          className="flex h-[181px] flex-1 flex-col items-center rounded-[14px] border-4 border-[#8a949e] bg-[#2d2d2d] pt-[36px]"
        >
          <svg viewBox="0 0 84 78" className="h-[78px] w-[84px]" fill="none" stroke="#fff" strokeWidth="6">
            {item.icon}
          </svg>
          <span className="text-[26px] leading-[30px]">{item.label}</span>
        </button>
      ))}
    </nav>
  );
}

export default function App() {
  return (
    <div className="overflow-hidden bg-black pb-[28px] font-['Inter',sans-serif] text-white">
      <StatusBar />
      <Header />
      <div className="mt-[19px] ml-[10px] flex h-[156px] w-screen">
        {TABS.map((name) => (
          <button
            key={name}
            type="button"
            className="flex-1 rounded-[4px] border-4 border-[#8a949e] bg-[#646464] px-[40px] text-[26px] leading-[38px] font-bold first:bg-[#fe0000]"
          >
            {name}
          </button>
        ))}
      </div>
      <main>
        <section className="mt-[26px] mr-[12px] ml-[18px] flex h-[1556px] border-4 border-[#f1f1f1]">
          <BoxList />
          <div className="w-[3px] bg-black" />
          <div className="min-w-0 flex-1 bg-[#303030] pr-[29px] pl-[26px]">
            <label className="flex h-[134px] items-center justify-center gap-[15px] pl-[19px] text-[14px]">
              <Tick className="size-[30px] rounded-[6px] border-4" />
              <span className="pt-[12px]">Select Area on Map</span>
            </label>
            <AreaMap />
          </div>
        </section>
        <Actions />
        <div className="mt-[25px] ml-[18px] h-[56px] border-t-[5px] border-l-[3px] border-[#505050]" />
      </main>
      <BottomNav />
      <div className="mx-auto mt-[71px] h-[17px] w-[470px] rounded-full bg-white" />
    </div>
  );
}
